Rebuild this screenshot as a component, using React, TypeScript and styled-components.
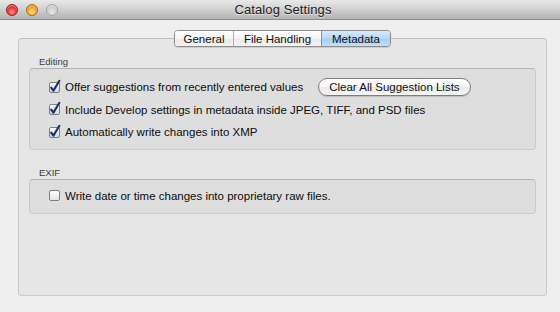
import React from 'react';
import styled, { createGlobalStyle } from 'styled-components';

const GlobalStyle = createGlobalStyle`
  html, body {
    margin: 0;
    padding: 0;
    background: #eeeeee;
  }
  * {
    box-sizing: border-box;
  }
`;

const Window = styled.div`
  width: 560px;
  height: 312px;
  display: flex;
  flex-direction: column;
  background: #eeeeee;
  font-family: "Lucida Grande", "Liberation Sans", Arial, sans-serif;
  color: #111;
  overflow: hidden;
`;

const TitleBar = styled.div`
  height: 20px;
  flex-shrink: 0;
  display: grid;
  grid-template-columns: 1fr auto 1fr;
  align-items: center;
  padding: 0 0 0 6px;
  background: linear-gradient(to bottom, #e9e9e9 0%, #d2d2d2 45%, #b4b4b4 100%);
  border-bottom: 1px solid #8e8e8e;
`;

const Lights = styled.div`
  display: flex;
  gap: 8px;
`;

const Light = styled.span<{ $tone: 'red' | 'yellow' | 'off' }>`
  width: 12px;
  height: 12px;
  border-radius: 50%;
  border: 1px solid
    ${({ $tone }) => ($tone === 'red' ? '#9b1b1b' : $tone === 'yellow' ? '#a4650f' : '#a5a5a5')};
  background: ${({ $tone }) =>
    $tone === 'red'
      ? 'radial-gradient(circle at 50% 70%, #ff9a9a 0%, #ef3b3b 45%, #b11515 100%)'
      : $tone === 'yellow'
      ? 'radial-gradient(circle at 50% 70%, #ffe38a 0%, #f5a623 50%, #c06e0c 100%)'
      : 'radial-gradient(circle at 50% 70%, #e6e6e6 0%, #cfcfcf 55%, #b5b5b5 100%)'};
  box-shadow: inset 0 1px 1px rgba(255, 255, 255, 0.6);
`;

const Title = styled.div`
  font-size: 13px;
  color: #222;
  letter-spacing: 0.1px;
  text-shadow: 0 1px 0 rgba(255, 255, 255, 0.5);
`;

const Body = styled.div`
  flex: 1;
  display: flex;
  flex-direction: column;
  padding: 10px 13px 16px 18px;
`;

const TabBar = styled.div`
  position: relative;
  z-index: 1;
  display: flex;
  justify-content: center;
`;

const Segments = styled.div`
  display: flex;
  height: 17px;
  border: 1px solid #8d8d8d;
  border-radius: 4px;
  overflow: hidden;
  box-shadow: 0 1px 1px rgba(0, 0, 0, 0.12);
`;

const Segment = styled.div<{ $active?: boolean }>`
  display: flex;
  align-items: center;
  justify-content: center;
  font-size: 11.5px;
  color: #111;
  border-left: 1px solid ${({ $active }) => ($active ? '#6f98cf' : '#b0b0b0')};
  background: ${({ $active }) =>
    $active
      ? 'linear-gradient(to bottom, #d9eafc 0%, #b6d6f8 50%, #a3cbf5 51%, #c4e0fb 100%)'
      : 'linear-gradient(to bottom, #ffffff 0%, #f4f4f4 50%, #e9e9e9 51%, #f3f3f3 100%)'};
  &:first-child {
    border-left: none;
  }
`;

const Panel = styled.div`
  flex: 1;
  margin-top: -9px;
  padding: 18px 10px 0 10px;
  background: #e6e6e6;
  border: 1px solid #c9c9c9;
  border-top-color: #bdbdbd;
  border-radius: 4px;
  display: flex;
  flex-direction: column;
`;

const GroupLabel = styled.div<{ $spaced?: boolean }>`
  font-size: 9.5px;
  color: #3c3c3c;
  padding-left: 10px;
  height: 10px;
  line-height: 10px;
  margin-top: ${({ $spaced }) => ($spaced ? '18px' : '0')};
`;

const Group = styled.div<{ $padTop: number; $padBottom: number }>`
  margin-top: 1px;
  padding: ${({ $padTop, $padBottom }) => `${$padTop}px 0 ${$padBottom}px 19px`};
  background: #dedede;
  border: 1px solid #cbcbcb;
  border-top-color: #b3b3b3;
  border-radius: 4px;
  display: flex;
  flex-direction: column;
`;

const Row = styled.div`
  height: 22.5px;
  display: flex;
  align-items: center;
  font-size: 11.5px;
  color: #0d0d0d;
`;

const RowText = styled.span`
  margin-left: 5px;
`;

const PillButton = styled.div`
  margin-left: 15px;
  height: 18px;
  padding: 0 10px;
  display: flex;
  align-items: center;
  font-size: 11.5px;
  color: #111;
  border: 1px solid #7d7d7d;
  border-radius: 9px;
  background: linear-gradient(to bottom, #ffffff 0%, #f7f7f7 50%, #e9e9e9 51%, #f6f6f6 100%);
  box-shadow: 0 1px 1px rgba(0, 0, 0, 0.15);
`;

const Box = styled.svg`
  flex-shrink: 0;
  overflow: visible;
`;

const CheckBox = ({ checked }: { checked: boolean }) => (
  <Box width="11" height="11" viewBox="0 0 11 11">
    <defs>
      <linearGradient id={checked ? 'cbOn' : 'cbOff'} x1="0" y1="0" x2="0" y2="1">
        <stop offset="0" stopColor="#ffffff" />
        <stop offset="1" stopColor={checked ? '#c9d6ea' : '#e4e4e4'} />
      </linearGradient>
    </defs>
    <rect
      x="0.5"
      y="0.5"
      width="10"
      height="10"
      rx="1.5"
      fill={`url(#${checked ? 'cbOn' : 'cbOff'})`}
      stroke="#7f7f7f"
    />
    {checked && (
      <path
        d="M2.2 5.6 L4.4 8.6 L10.4 -1.2"
        fill="none"
        stroke="#1c2f66"
        strokeWidth="2.1"
        strokeLinecap="round"
        strokeLinejoin="round"
      />
    )}
  </Box>
);

const tabs = ['General', 'File Handling', 'Metadata'];
const tabWidths = [58, 88, 69];

export default function App() {
  return (
    <>
      <GlobalStyle />
      <Window>
        <TitleBar>
          <Lights>
            <Light $tone="red" />
            <Light $tone="yellow" />
            <Light $tone="off" />
          </Lights>
          <Title>Catalog Settings</Title>
          <div />
        </TitleBar>
        <Body>
          <TabBar>
            <Segments>
              {tabs.map((t, i) => (
                <Segment key={t} $active={t === 'Metadata'} style={{ width: tabWidths[i] }}>
                  {t}
                </Segment>
              ))}
            </Segments>
          </TabBar>
          <Panel>
            <GroupLabel>Editing</GroupLabel>
            <Group $padTop={7} $padBottom={5}>
              <Row>
                <CheckBox checked />
                <RowText>Offer suggestions from recently entered values</RowText>
                <PillButton>Clear All Suggestion Lists</PillButton>
              </Row>
              <Row>
                <CheckBox checked />
                <RowText>Include Develop settings in metadata inside JPEG, TIFF, and PSD files</RowText>
              </Row>
              <Row>
                <CheckBox checked />
                <RowText>Automatically write changes into XMP</RowText>
              </Row>
            </Group>
            <GroupLabel $spaced>EXIF</GroupLabel>
            <Group $padTop={5} $padBottom={6}>
              <Row>
                <CheckBox checked={false} />
                <RowText>Write date or time changes into proprietary raw files.</RowText>
              </Row>
            </Group>
          </Panel>
        </Body>
      </Window>
    </>
  );
}
